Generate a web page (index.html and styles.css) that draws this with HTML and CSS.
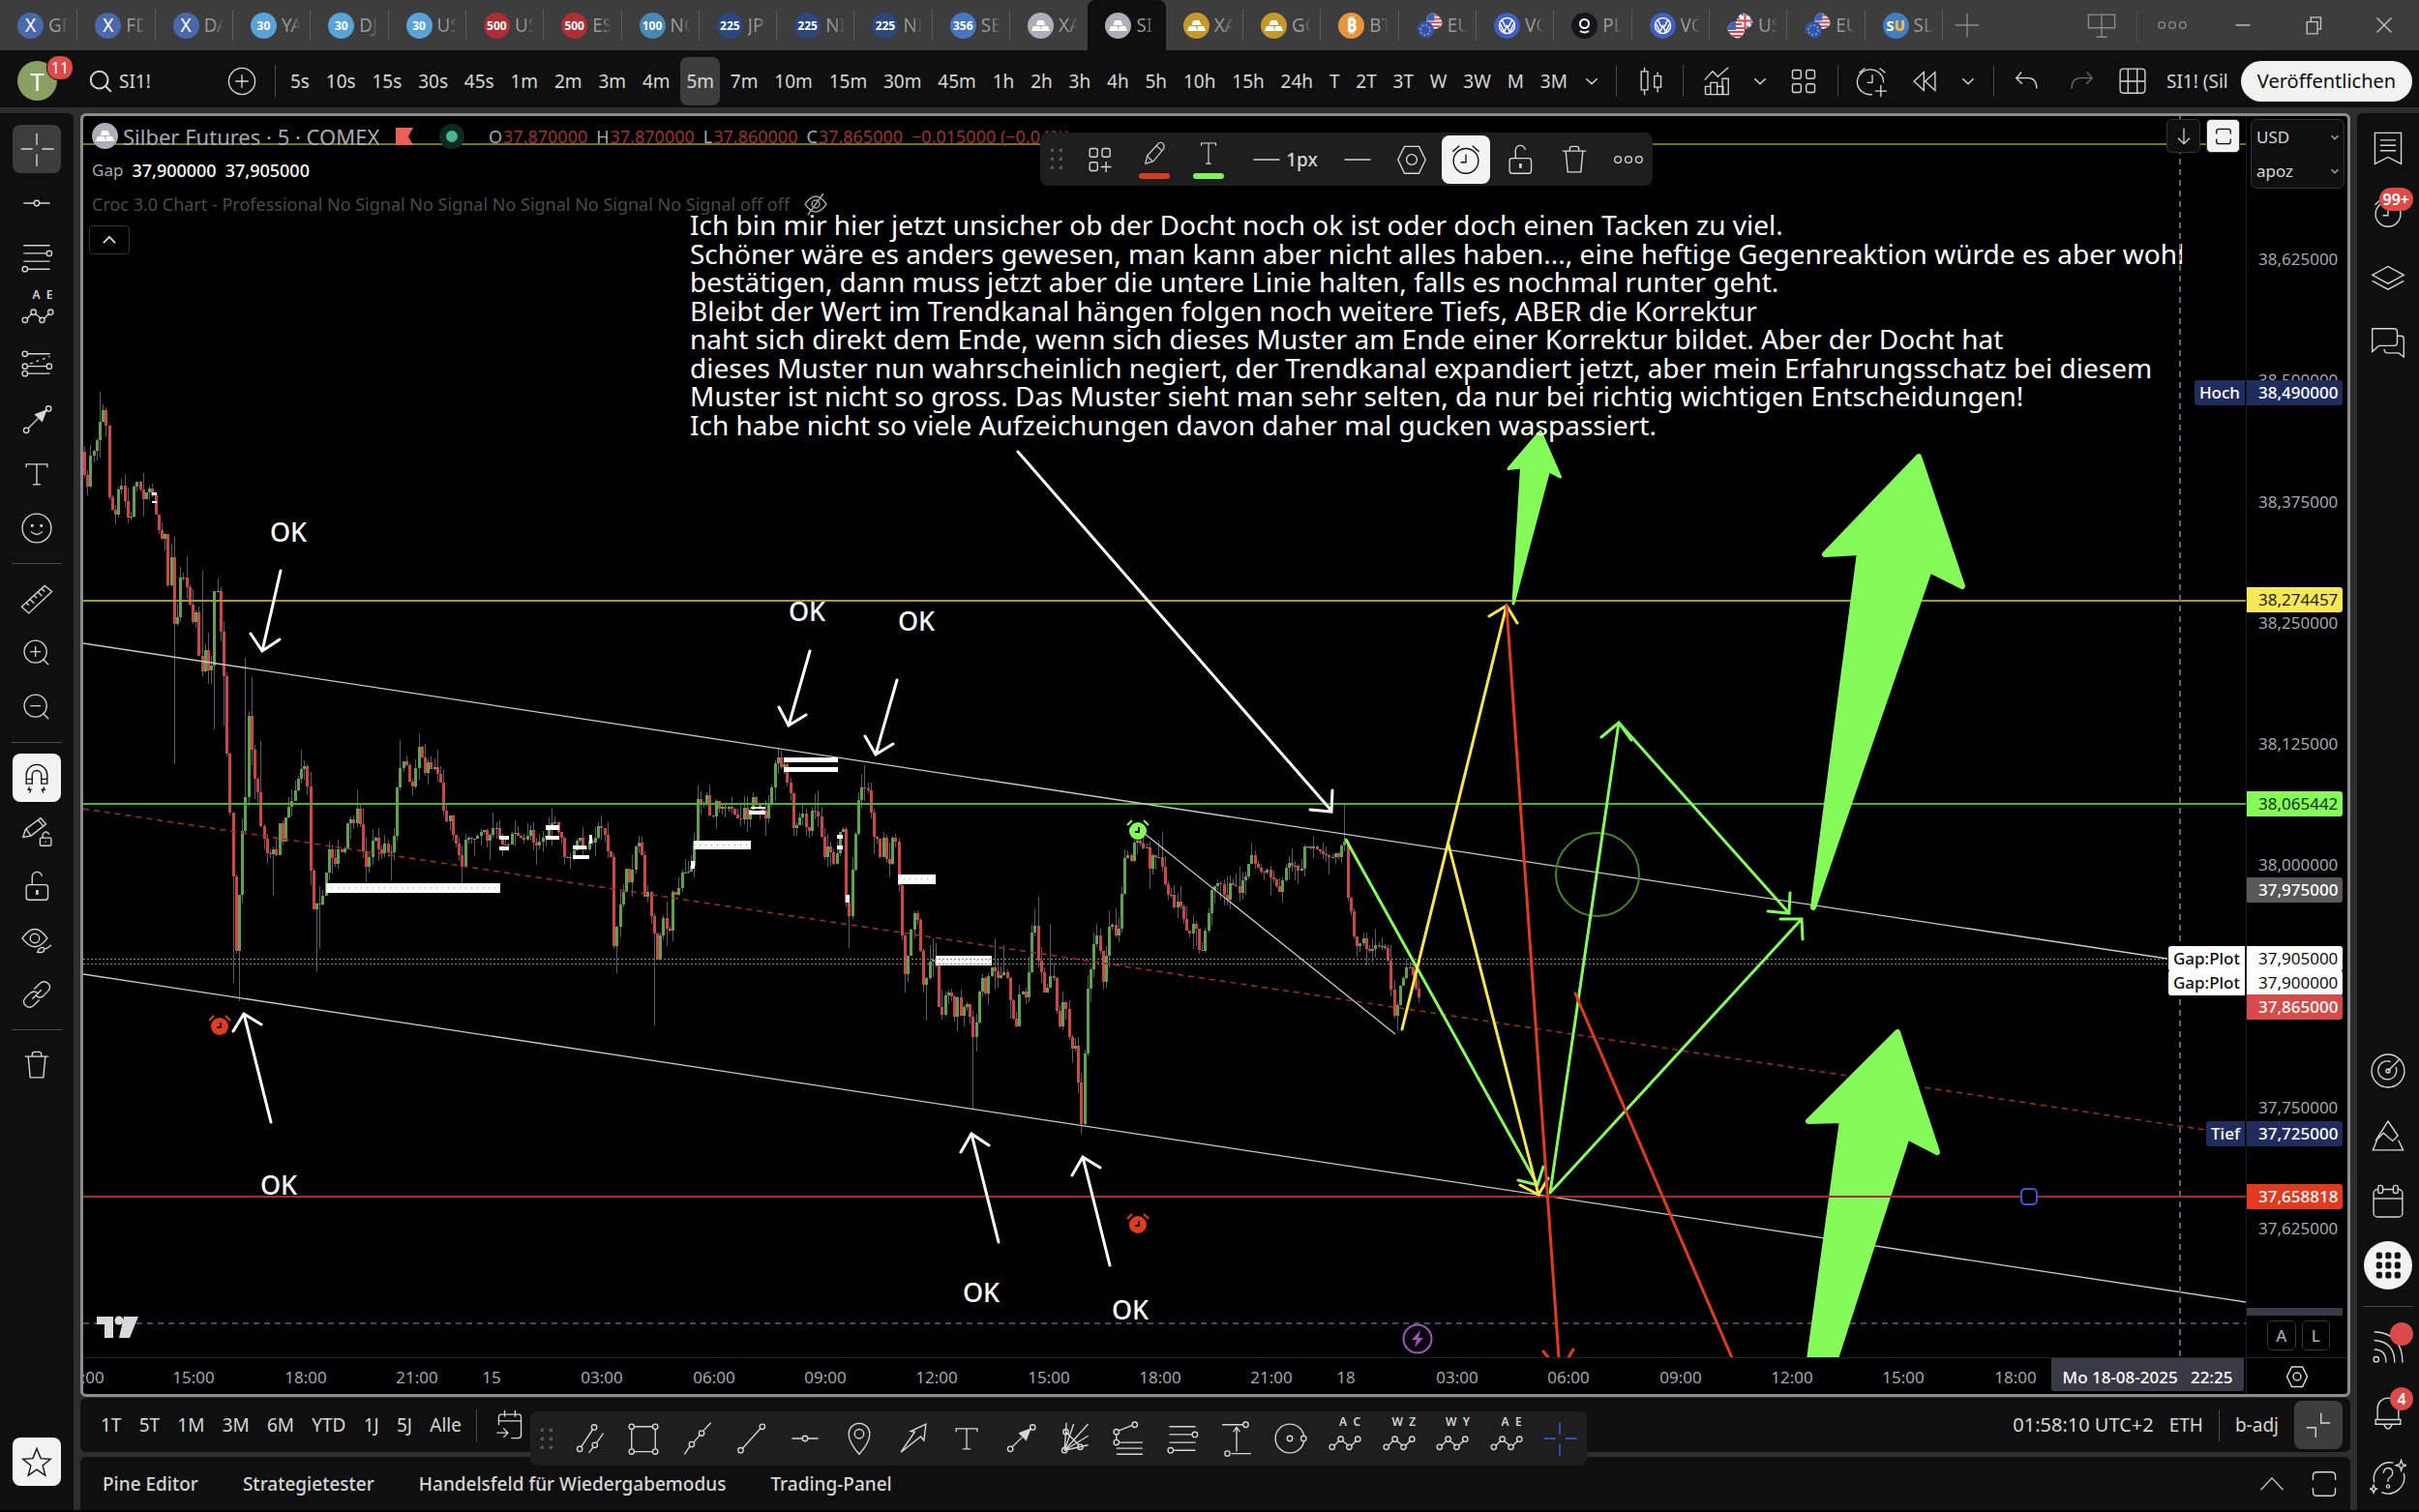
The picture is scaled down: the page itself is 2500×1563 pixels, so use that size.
FILE: index.html
```html
<!DOCTYPE html>
<html lang="de">
<head>
<meta charset="utf-8">
<title>SI1! – Silber Futures</title>
<link rel="stylesheet" href="styles.css">
</head>
<body>
<svg class="sprite" aria-hidden="true">
  <symbol id="bars" viewBox="0 0 27 27"><path fill="#fff" stroke="none" d="M10.500 8h6l2 5h-10zM6 14h6.500l2 5H4zM14.500 14H21l2 5h-8.500z"/></symbol>
  <symbol id="us" viewBox="0 0 18 18"><circle cx="9" cy="9" r="9" fill="#eee" stroke="none"/><path stroke="#d8424a" stroke-width="2" d="M9 3h6M9 7h9M1 11h16M3 15h12"/><path fill="#3b63b8" stroke="none" d="M9 0v9H0a9 9 0 0 1 9-9z"/></symbol>
  <symbol id="eu" viewBox="0 0 18 18"><circle cx="9" cy="9" r="9" fill="#2f55b8" stroke="none"/><circle cx="9" cy="9" r="5" stroke="#d9c04a" stroke-width="1.500" stroke-dasharray="1.500 2.400"/></symbol>
  <symbol id="gb" viewBox="0 0 18 18"><circle cx="9" cy="9" r="9" fill="#2f4fa0" stroke="none"/><path stroke="#eee" stroke-width="4" d="M9 0v18M0 9h18M3 3l12 12M15 3L3 15"/><path stroke="#d8424a" stroke-width="2" d="M9 0v18M0 9h18"/></symbol>
  <symbol id="vw" viewBox="0 0 27 27"><circle cx="13.500" cy="13.500" r="13.500" fill="#3f5fc4" stroke="none"/><g stroke="#fff" stroke-width="1.500"><circle cx="13.500" cy="13.500" r="8"/><path d="M8.500 8l3 6h4l3-6M6.500 11.500l4 8.500 3-6 3 6 4-8.500"/></g></symbol>
  <symbol id="plus" viewBox="0 0 28 28"><path d="M14 5v18M5 14h18"/></symbol>
  <symbol id="monitor" viewBox="0 0 28 28"><path d="M4 6h20v10H4zM14 6v17M10 23h8"/></symbol>
  <symbol id="more" viewBox="0 0 28 28"><circle cx="6" cy="14" r="2.500"/><circle cx="14" cy="14" r="2.500"/><circle cx="22" cy="14" r="2.500"/></symbol>
  <symbol id="min" viewBox="0 0 28 28"><path d="M8.500 14h11"/></symbol>
  <symbol id="restore" viewBox="0 0 28 28"><path d="M9 11.500h8v9H9zM12 11V8h7.500v9H17"/></symbol>
  <symbol id="close" viewBox="0 0 28 28"><path d="M8.500 8.500l11 11M19.500 8.500l-11 11"/></symbol>
  <symbol id="search" viewBox="0 0 28 28"><circle cx="13" cy="13" r="6.500"/><path d="M17.500 17.500l4.500 4.500"/></symbol>
  <symbol id="pluscircle" viewBox="0 0 28 28"><circle cx="14" cy="14" r="10"/><path d="M14 9v10M9 14h10"/></symbol>
  <symbol id="down" viewBox="0 0 28 28"><path d="M6 10l8 8 8-8"/></symbol>
  <symbol id="up" viewBox="0 0 28 28"><path d="M5.500 18.500L14 9.500l8.500 9"/></symbol>
  <symbol id="candles" viewBox="0 0 28 28"><path d="M7.500 6.500h5v14h-5zM10 3.500v3M10 20.500v4M17.500 10h5v8.500h-5zM20 7v3M20 18.500v4"/></symbol>
  <symbol id="indicators" viewBox="0 0 28 28"><path d="M5.500 24v-6h4v6M9.500 24v-9h5v9M14.500 24v-6H19v6M18.500 24V12H23v12zM5.500 24h17M5 13l6-6.500 4 4L23 3.500"/></symbol>
  <symbol id="grid4" viewBox="0 0 28 28"><rect x="5.500" y="5.500" width="6.500" height="6.500" rx="1.500"/><rect x="16" y="5.500" width="6.500" height="6.500" rx="1.500"/><rect x="5.500" y="16" width="6.500" height="6.500" rx="1.500"/><rect x="16" y="16" width="6.500" height="6.500" rx="1.500"/></symbol>
  <symbol id="template" viewBox="0 0 28 28"><rect x="6" y="5.500" width="6" height="6.500" rx="1.500"/><rect x="15.500" y="5.500" width="6" height="6.500" rx="1.500"/><rect x="6" y="16" width="6" height="6.500" rx="1.500"/><path d="M18.500 15.500v8M14.500 19.500h8"/></symbol>
  <symbol id="alertadd" viewBox="0 0 28 28"><path d="M14 24a10 9.500 0 1 1 8.500-9M14 9v6h-4M4 7.500L8.500 4M24 7.500L19.500 4M20.500 17v9M16 21.500h9"/></symbol>
  <symbol id="alarm" viewBox="0 0 28 28"><circle cx="14" cy="15" r="9.500"/><path d="M14 10v6h-4M4 8l5-4.500M24 8l-5-4.500"/></symbol>
  <symbol id="rewind" viewBox="0 0 28 28"><path d="M13.500 7v14L6 14zM22 7v14l-7.500-7z"/></symbol>
  <symbol id="undo" viewBox="0 0 28 28"><path d="M9 7l-4 4.500L9.500 16M5.500 11.500H14q6.500 0 6.500 8"/></symbol>
  <symbol id="redo" viewBox="0 0 28 28"><path d="M19 7l4 4.500-4.500 4.500M22.500 11.500H14q-6.500 0-6.500 8"/></symbol>
  <symbol id="layout" viewBox="0 0 28 28"><rect x="4.500" y="4.500" width="19" height="18.500" rx="2.500"/><path d="M10.500 4.500V23M17.500 4.500V23M4.500 14h19"/></symbol>
  <symbol id="cross" viewBox="0 0 28 28"><path d="M14 2v9M14 18v9M2 14h9M18 14h9"/></symbol>
  <symbol id="hline" viewBox="0 0 28 28"><circle cx="14" cy="14" r="2"/><path d="M4 14h8M16 14h8"/></symbol>
  <symbol id="fib" viewBox="0 0 28 28"><path d="M4 5h20M4 11h18M4 17h20M7 23h17"/><circle cx="23.500" cy="11" r="2" class="dot"/><circle cx="5" cy="23" r="2" class="dot"/></symbol>
  <symbol id="pattern" viewBox="0 0 28 28"><path d="M6.500 19.500l4-4M12.500 15.500l5 4M19.500 19.500l4-4"/><circle cx="5" cy="20.500" r="2"/><circle cx="11.500" cy="14.500" r="2"/><circle cx="18" cy="20.500" r="2"/><circle cx="24.500" cy="14.500" r="2"/></symbol>
  <symbol id="forecast" viewBox="0 0 28 28"><path d="M6.500 5H24M6.500 14.500h15M6.500 20H24"/><path stroke-dasharray="2 3" d="M9 12.500L24 7"/><circle cx="5" cy="5" r="2"/><circle cx="5" cy="14.500" r="2"/><circle cx="23.500" cy="14.500" r="2"/><circle cx="5" cy="20" r="2"/></symbol>
  <symbol id="marker" viewBox="0 0 28 28"><path d="M7.500 20.500L15 13M20 8l2-2"/><path fill="currentColor" d="M21 7l-3 8-5-5z"/><circle cx="6" cy="22" r="2"/><circle cx="23" cy="5.500" r="2"/></symbol>
  <symbol id="text" viewBox="0 0 28 28"><path d="M6 9V6.500h16V9M14 6.500V22M11 22h6"/></symbol>
  <symbol id="smile" viewBox="0 0 28 28"><circle cx="14" cy="14" r="11"/><path d="M9.500 16.500q4.500 4.500 9 0"/><path stroke-width="2" d="M10.500 11v2M17.500 11v2"/></symbol>
  <symbol id="ruler" viewBox="0 0 28 28"><path d="M2.500 20L20 4l5.500 4.500L8 25zM6 17l2 2M9 14.500l3 3M12 11.500l2 2M15 9l3 3M18 6.500l2 2"/></symbol>
  <symbol id="zoomin" viewBox="0 0 28 28"><circle cx="13" cy="13" r="8.500"/><path d="M19 19l4 4M9 13h8M13 9v8"/></symbol>
  <symbol id="zoomout" viewBox="0 0 28 28"><circle cx="13" cy="13" r="8.500"/><path d="M19 19l4 4M9 13h8"/></symbol>
  <symbol id="magnet" viewBox="0 0 28 28"><path d="M6 18.500V12a8 8 0 0 1 16 0v6.500h-4.500V12a3.500 3.500 0 0 0-7 0v6.500zM6 15h4.500M17.500 15H22M8.500 21L7.500 23H9.500L8.500 25.500M19 21l1 2h-2l1 2.500"/></symbol>
  <symbol id="pencillock" viewBox="0 0 28 28"><path d="M3.500 18l2-6L17 3.500 21 8 9.500 17zM6 12l3.500 5M15 5l4 4.500"/><rect x="16.500" y="18.500" width="8.500" height="6" rx="1"/><path d="M18.500 18.500V16q2.500-4 5 0M20.800 21v1"/></symbol>
  <symbol id="lock" viewBox="0 0 28 28"><rect x="6" y="13" width="16.500" height="11.500" rx="2"/><path d="M10.500 13V7.500a3.700 3.700 0 0 1 7.500-1"/><path stroke-width="2" d="M14.300 17v3.500"/></symbol>
  <symbol id="eye" viewBox="0 0 28 28"><path d="M3 12.500q9.500-14 19 0-9.500 13-19 0z"/><circle cx="12.500" cy="12.500" r="3.500"/><path d="M14.500 23q2-5 5-3 1 4-5 3zM20 20.500q2 0 5-3"/></symbol>
  <symbol id="link" viewBox="0 0 28 28"><path d="M12 10l4.500-4.500q3-2.500 6 0t0 6L19 15q-3 2.500-5.500 0M16 18l-4.500 4.500q-3 2.500-6 0t0-6L9 13q3-2.500 5.500 0M10.500 17.500l7-7"/></symbol>
  <symbol id="trash" viewBox="0 0 28 28"><path d="M5 7.500h18M7.500 7.500L9 23.500h10l1.500-16M10.500 7.500V6q0-2 2-2h3q2 0 2 2v1.500"/></symbol>
  <symbol id="star" viewBox="0 0 28 28"><path d="M14 4l3 7.500 7.500.5-6 5 2 7.500-6.500-4.500-6.500 4.500 2-7.500-6-5 7.500-.5z"/></symbol>
  <symbol id="bookmark" viewBox="0 0 28 28"><path d="M4 2.500h20V26l-10-5-10 5zM8 8h12M8 12h12M8 16h12"/></symbol>
  <symbol id="layers" viewBox="0 0 28 28"><path d="M2 12l12-6.500L26 12l-12 6.500zM2 16.500L14 23l12-6.500"/></symbol>
  <symbol id="chat" viewBox="0 0 28 28"><path d="M2 3.500h16.500q2.500 0 2.500 2.500v8q0 2.500-2.500 2.500H7L2 21zM21 9h2.500q2.500 0 2.500 2.500V25l-4-3h-8.500q-2 0-2.500-3"/></symbol>
  <symbol id="radar" viewBox="0 0 28 28"><circle cx="14" cy="14" r="12.500"/><path d="M20 11a7 7 0 1 1-4-4M14 14l9-9"/><circle cx="14" cy="14" r="1.500"/></symbol>
  <symbol id="pyramid" viewBox="0 0 28 28"><path d="M4.500 18L14 3l7.500 11-4 4-7-6zM5.500 17.500L2.500 25h23L22 17.500"/></symbol>
  <symbol id="calendar" viewBox="0 0 28 28"><rect x="3" y="5.500" width="22" height="21" rx="3"/><path d="M3 12.500h22"/><rect x="6.500" y="2.500" width="3.500" height="6" rx="1.500" class="dot"/><rect x="18" y="2.500" width="3.500" height="6" rx="1.500" class="dot"/></symbol>
  <symbol id="apps" viewBox="0 0 28 28"><g fill="#0f0f0f" stroke="none"><rect x="5" y="4" width="4.500" height="5" rx="1.500"/><rect x="12" y="4" width="4.500" height="5" rx="1.500"/><rect x="19" y="4" width="4.500" height="5" rx="1.500"/><rect x="5" y="11.500" width="4.500" height="5" rx="1.500"/><rect x="12" y="11.500" width="4.500" height="5" rx="1.500"/><rect x="19" y="11.500" width="4.500" height="5" rx="1.500"/><rect x="5" y="19" width="4.500" height="5" rx="1.500"/><rect x="12" y="19" width="4.500" height="5" rx="1.500"/><rect x="19" y="19" width="4.500" height="5" rx="1.500"/></g></symbol>
  <symbol id="feed" viewBox="0 0 28 28"><circle cx="5" cy="23" r="2"/><path d="M3.500 15.500q9 0 9 10M3.500 8.500q15.500 1 15.500 17M3.500 2Q25 3 25 25.500"/></symbol>
  <symbol id="bell" viewBox="0 0 28 28"><path d="M6 19.500V11a8 8 0 0 1 16 0v8.500M4.500 19.500h19v3.500h-19zM11 23.500q3 6 6 0"/></symbol>
  <symbol id="help" viewBox="0 0 28 28"><path d="M18 3A12.500 12.500 0 0 0 3.500 18M9 25.500A12.500 12.500 0 0 0 26 11M10.500 11q.5-4 3.500-4t3.500 3.500q0 2.500-2 3.500T14 17.500"/><circle cx="14" cy="21" r="1.200"/><path d="M24 1l1 3 3 1-3 1-1 3-1-3-3-1 3-1zM3 20l1 2.500 2 .5-2 .5-1 2.500-1-2.500-2-.5 2-.5z"/></symbol>
  <symbol id="pencil" viewBox="0 0 28 28"><path d="M6 22l1.500-7L18 3.500q2.500-1.500 4 .5t.5 4.500L13 20zM16 6l4.500 4M7.500 15l5 5"/></symbol>
  <symbol id="textline" viewBox="0 0 28 28"><path d="M7.500 6V3.500h13V6M14 3.500V22M11.500 22h5"/></symbol>
  <symbol id="line" viewBox="0 0 28 28"><path d="M4 14h20"/></symbol>
  <symbol id="hex" viewBox="0 0 28 28"><path d="M8.500 4h11l5 10-5 10.500h-11L3.500 14z"/><circle cx="14" cy="14" r="4"/></symbol>
  <symbol id="arrowdown" viewBox="0 0 28 28"><path d="M14 4v19M7 16l7 7 7-7"/></symbol>
  <symbol id="frame" viewBox="0 0 28 28"><path d="M5.500 11V8q0-3 3-3h11q3 0 3 3v3M5.500 17v3q0 3 3 3h11q3 0 3-3v-3"/></symbol>
  <symbol id="eyeoff" viewBox="0 0 28 28"><path d="M3 14q11-16 22 0-11 16-22 0zM22 3L6 25"/><circle cx="14" cy="14" r="4"/></symbol>
  <symbol id="goto" viewBox="0 0 28 28"><path d="M5.500 14V8q0-2 2-2h13q2 0 2 2v14q0 2-2 2H15M5.500 11h17M10 3v5M18 3v5M4 20h8M9 16.500l3.500 3.500L9 23.500"/></symbol>
  <symbol id="collapse" viewBox="0 0 28 28"><path d="M16 5v7.500h7M12 23.500V16H5"/></symbol>
  <symbol id="parallel" viewBox="0 0 28 28"><path d="M7 20.500L16 7M13 25l3-4M19 17l5-7"/><circle cx="6" cy="22" r="2"/><circle cx="17" cy="5.500" r="2"/><circle cx="17.500" cy="19" r="2"/></symbol>
  <symbol id="rect" viewBox="0 0 28 28"><path d="M7 5h14M7 24h14M5 7v15M23 7v15"/><circle cx="5" cy="5" r="2"/><circle cx="23" cy="5" r="2"/><circle cx="5" cy="24" r="2"/><circle cx="23" cy="24" r="2"/></symbol>
  <symbol id="extended" viewBox="0 0 28 28"><path d="M4 26l4-6M11 17l5-6M18.500 8L24 2"/><circle cx="9.500" cy="18.500" r="2"/><circle cx="17" cy="10" r="2"/></symbol>
  <symbol id="trend" viewBox="0 0 28 28"><path d="M7 21.500L20.500 6.500"/><circle cx="5.500" cy="23" r="2"/><circle cx="22" cy="5" r="2"/></symbol>
  <symbol id="pin" viewBox="0 0 28 28"><path d="M14 26Q6 17 6 10.500a8 8 0 0 1 16 0Q22 17 14 26z"/><circle cx="14" cy="10.500" r="3.500"/></symbol>
  <symbol id="arrow" viewBox="0 0 28 28"><path d="M4.500 24.500L15 9l-3-.5L23.500 3 22 15.500l-2.500-3z"/></symbol>
  <symbol id="gann" viewBox="0 0 28 28"><path d="M6 23L7.500 2M6 23l7-20M6 23L24 3M6 23l18-11M6 23l18-4M7 9l10 10"/><circle cx="6" cy="23" r="2"/><circle cx="7" cy="9" r="2"/><circle cx="18" cy="20.500" r="2"/></symbol>
  <symbol id="fibext" viewBox="0 0 28 28"><path d="M7 8l10-4M5 11v4M7 17h18M5 21.500h20M5 26h20"/><circle cx="19" cy="3.500" r="2"/><circle cx="5" cy="9" r="2"/><circle cx="5" cy="17" r="2"/></symbol>
  <symbol id="measure" viewBox="0 0 28 28"><path d="M3 3.500h16M10 25.500h15M14 6v18M11.500 9L14 5.500 16.500 9"/><circle cx="21" cy="3.500" r="2"/><circle cx="7" cy="25.500" r="2"/></symbol>
  <symbol id="circle" viewBox="0 0 28 28"><circle cx="14" cy="14" r="11"/><circle cx="14" cy="14" r="2"/><circle cx="24.500" cy="14" r="2" class="dot"/></symbol>
</svg>

<div class="app">
  <nav class="tabbar" aria-label="Tabs">
    <div class="tabs">
      <button class="tab"><i class="coin blue x">X</i><span>GE</span></button>
      <button class="tab"><i class="coin blue x">X</i><span>FD</span></button>
      <button class="tab"><i class="coin blue x">X</i><span>DA</span></button>
      <button class="tab"><i class="coin sky">30</i><span>YA</span></button>
      <button class="tab"><i class="coin sky">30</i><span>DJ</span></button>
      <button class="tab"><i class="coin sky">30</i><span>US</span></button>
      <button class="tab"><i class="coin crimson">500</i><span>US</span></button>
      <button class="tab"><i class="coin crimson">500</i><span>ES</span></button>
      <button class="tab"><i class="coin teal">100</i><span>NQ</span></button>
      <button class="tab"><i class="coin navy">225</i><span>JP</span></button>
      <button class="tab"><i class="coin navy">225</i><span>NI</span></button>
      <button class="tab"><i class="coin navy">225</i><span>NI</span></button>
      <button class="tab"><i class="coin steel">356</i><span>SE</span></button>
      <button class="tab last"><svg class="coin silver"><use href="#bars"/></svg><span>XA</span></button>
      <button class="tab active"><svg class="coin silver"><use href="#bars"/></svg><span>SI</span></button>
      <button class="tab"><svg class="coin gold"><use href="#bars"/></svg><span>XA</span></button>
      <button class="tab"><svg class="coin gold"><use href="#bars"/></svg><span>GC</span></button>
      <button class="tab"><i class="coin orange">₿</i><span>BT</span></button>
      <button class="tab"><svg class="coin"><use href="#us" x="10" y="0" width="17" height="17"/><use href="#eu" x="0" y="9" width="18" height="18"/></svg><span>EU</span></button>
      <button class="tab"><svg class="coin"><use href="#vw"/></svg><span>VO</span></button>
      <button class="tab"><svg class="coin black" viewBox="0 0 27 27"><g stroke="#fff" stroke-width="2"><circle cx="13.500" cy="11.500" r="4.500"/><path d="M9 19q4.500 3 9 0"/></g></svg><span>PL</span></button>
      <button class="tab"><svg class="coin"><use href="#vw"/></svg><span>VO</span></button>
      <button class="tab"><svg class="coin"><use href="#gb" x="10" y="0" width="17" height="17"/><use href="#us" x="0" y="9" width="18" height="18"/></svg><span>US</span></button>
      <button class="tab"><svg class="coin"><use href="#us" x="10" y="0" width="17" height="17"/><use href="#eu" x="0" y="9" width="18" height="18"/></svg><span>EU</span></button>
      <button class="tab"><i class="coin slblue">S<b>U</b></i><span>SL</span></button>
    </div>
    <button class="ic dim newtab" aria-label="Neuer Tab"><svg><use href="#plus"/></svg></button>
    <div class="window">
      <button class="ic dim" aria-label="Layouts"><svg><use href="#monitor"/></svg></button>
      <i class="sep"></i>
      <button class="ic dim" aria-label="Mehr"><svg><use href="#more"/></svg></button>
      <div class="winbtns">
        <button aria-label="Minimieren"><svg><use href="#min"/></svg></button>
        <button aria-label="Wiederherstellen"><svg><use href="#restore"/></svg></button>
        <button aria-label="Schließen"><svg><use href="#close"/></svg></button>
      </div>
    </div>
  </nav>

  <header class="toolbar">
    <button class="avatar">T<b class="badge">11</b></button>
    <button class="symbol"><svg class="bold"><use href="#search"/></svg>SI1!</button>
    <button class="ic" aria-label="Vergleichen"><svg><use href="#pluscircle"/></svg></button>
    <i class="sep"></i>
    <div class="intervals">
      <button>5s</button><button>10s</button><button>15s</button><button>30s</button><button>45s</button><button>1m</button><button>2m</button><button>3m</button><button>4m</button><button class="on">5m</button><button>7m</button><button>10m</button><button>15m</button><button>30m</button><button>45m</button><button>1h</button><button>2h</button><button>3h</button><button>4h</button><button>5h</button><button>10h</button><button>15h</button><button>24h</button><button>T</button><button>2T</button><button>3T</button><button>W</button><button>3W</button><button>M</button><button>3M</button>
    </div>
    <button class="chev" aria-label="Intervalle"><svg><use href="#down"/></svg></button>
    <i class="sep"></i>
    <button class="ic" aria-label="Kerzen"><svg><use href="#candles"/></svg></button>
    <i class="sep"></i>
    <div class="tools">
      <button class="ic" aria-label="Indikatoren"><svg><use href="#indicators"/></svg></button>
      <button class="chev" aria-label="Favoriten"><svg><use href="#down"/></svg></button>
      <button class="ic" aria-label="Vorlagen"><svg><use href="#grid4"/></svg></button>
      <i class="sep"></i>
      <button class="ic" aria-label="Alarm"><svg><use href="#alertadd"/></svg></button>
      <button class="ic" aria-label="Wiedergabe"><svg><use href="#rewind"/></svg></button>
      <button class="chev" aria-label="Wiedergabe wählen"><svg><use href="#down"/></svg></button>
      <i class="sep"></i>
      <button class="ic" aria-label="Rückgängig"><svg><use href="#undo"/></svg></button>
      <button class="ic faint" aria-label="Wiederholen"><svg><use href="#redo"/></svg></button>
      <button class="ic" aria-label="Layout"><svg><use href="#layout"/></svg></button>
    </div>
    <div class="share">
      <button class="layoutname">SI1! (Sil</button>
      <button class="publish">Veröffentlichen</button>
    </div>
  </header>

  <main class="main">
    <aside class="left">
      <button class="sq soft" aria-label="Fadenkreuz"><svg><use href="#cross"/></svg></button>
      <button class="sq" aria-label="Linien"><svg><use href="#hline"/></svg></button>
      <button class="sq" aria-label="Fibonacci"><svg><use href="#fib"/></svg></button>
      <button class="sq lettered" aria-label="Muster"><small>A&nbsp; E</small><svg><use href="#pattern"/></svg></button>
      <button class="sq" aria-label="Prognose"><svg><use href="#forecast"/></svg></button>
      <button class="sq" aria-label="Pfeil"><svg><use href="#marker"/></svg></button>
      <button class="sq" aria-label="Text"><svg><use href="#text"/></svg></button>
      <button class="sq" aria-label="Symbole"><svg><use href="#smile"/></svg></button>
      <hr>
      <button class="sq" aria-label="Messen"><svg><use href="#ruler"/></svg></button>
      <button class="sq" aria-label="Vergrößern"><svg><use href="#zoomin"/></svg></button>
      <button class="sq" aria-label="Verkleinern"><svg><use href="#zoomout"/></svg></button>
      <hr>
      <button class="sq light" aria-label="Magnet"><svg><use href="#magnet"/></svg></button>
      <button class="sq" aria-label="Zeichenmodus"><svg><use href="#pencillock"/></svg></button>
      <button class="sq" aria-label="Sperren"><svg><use href="#lock"/></svg></button>
      <button class="sq" aria-label="Ausblenden"><svg><use href="#eye"/></svg></button>
      <button class="sq" aria-label="Verknüpfen"><svg><use href="#link"/></svg></button>
      <hr>
      <button class="sq" aria-label="Löschen"><svg><use href="#trash"/></svg></button>
      <button class="sq light bottom" aria-label="Favoriten"><svg><use href="#star"/></svg></button>
    </aside>

    <section class="center">
      <div class="chart">
        <div class="plot">
          <svg class="draw" viewBox="86 120 2235 1283" preserveAspectRatio="none">
            <path stroke="#7b701b" stroke-width="2" d="M86 149h2235"/>
            <path stroke="#454a57" stroke-width="2" stroke-dasharray="6 5" d="M86 1368h2235"/>
            <g id="candlestick">
              <path id="wicks" stroke="#5b5b66"/>
              <path id="ups" fill="#5fa24c"/>
              <path id="downs" fill="#cf4446"/>
            </g>
            <path fill="#fff" d="M337 913h180v10H337zM516 864h10v4h-10zM516 875h10v4h-10zM564 853h14v5h-14zM564 864h14v4h-14zM592 874h14v4h-14zM592 884h17v4h-17zM609 863h3v9h-3zM717 869h59v9h-59zM774 838h17v4h-17zM776 834h15v2h-15zM714 890h4v8h-4zM810 783h56v5h-56zM810 793h56v5h-56zM865 863h6v4h-6zM865 874h6v4h-6zM874 925h4v8h-4zM928 904h39v10h-39zM967 988h58v10h-58zM157 509h5v3h-5zM157 518h5v2h-5z"/>
            <path stroke="#888" stroke-dasharray="1 5" d="M337 918h180M717 873.500h59M928 909h39M967 993h58"/>
            <path stroke="#8a8a8a" stroke-dasharray="2 2" d="M86 991.500h2154M86 996.500h2154"/>
            <path stroke="#a8982f" stroke-width="2" d="M86 621h2235"/>
            <path stroke="#55ad38" stroke-width="2" d="M86 831h2235"/>
            <path stroke="#c9c9c9" stroke-width="1.300" d="M86 665L2240 991M86 1007L2321 1346M1172 853L1442 1069"/>
            <path stroke="#a62c1b" stroke-width="1.500" stroke-dasharray="6 5" d="M86 836L2279 1168"/>
            <g fill="#84fb58" stroke="#84fb58" stroke-width="6" stroke-linejoin="round">
              <path stroke-width="3" d="M1592 446L1559 484.500 1572.500 483 1564 624 1600.500 487 1612.500 493z"/>
              <path d="M1983 472L1886 573 1922 571 1874 938 1994 589 2028 606z"/>
              <path d="M1961 1067L1869 1159 1904 1158 1868 1420 1892 1420 1971 1175 2002 1191z"/>
            </g>
            <path stroke="#a62c1b" stroke-width="2" d="M86 1237h2235"/>
            <circle cx="1651" cy="904" r="43" stroke="#3f8a26" stroke-width="2"/>
            <g stroke-width="3" stroke-linecap="round">
              <path stroke="#fff" d="M290 590L271 673M259 655l12 18 18-12M837 673l-22 77M805 731l10 19 18-11M927 703l-22 77M894 761l11 19 18-11M280 1160L252 1048M241 1066l11-18 18 11M1032 1284L1004 1172M993 1191l11-19 18 12M1147 1308L1119 1196M1108 1215l11-19 18 11M1052 467L1376 838M1354 837l22 2 1-22"/>
              <path stroke="#84fb58" d="M1391 868L1589 1225M1569 1220l20 5 6-19M1602 1233L1673 747M1655 762l18-15 13 18M1673 747L1849 944M1827 942l22 2 1-21M1602 1233L1862 950M1840 950h22l1 21"/>
              <path stroke="#f9e64f" d="M1449 1064L1557 626M1539 637l18-11 11 18M1497 873L1590 1235M1571 1225l19 10 10-17"/>
              <path stroke="#e23a1e" d="M1557 626L1612 1418M1595 1397l17 21 14-23M1628 1027L1797 1420"/>
            </g>
            <g fill="#e23a1e"><circle cx="227" cy="1061" r="9"/><circle cx="1176" cy="1266" r="9"/></g>
            <circle cx="1176" cy="859" r="9" fill="#84fb58"/>
            <path stroke="#e23a1e" stroke-width="2" d="M216 1055l5-5M238 1055l-5-5M1165 1260l5-5M1187 1260l-5-5"/>
            <path stroke="#84fb58" stroke-width="2" d="M1165 853l5-5M1187 853l-5-5"/>
            <path stroke="#111" stroke-width="2" d="M228 1057v5h-4M1177 1262v5h-4M1177 855v5h-4"/>
            <rect x="2089" y="1229" width="16" height="16" rx="4" fill="#000" stroke="#4453cf" stroke-width="2"/>
            <g fill="#d9d9d9"><path d="M100 1361h17v22h-9v-14h-8zM128 1361h15l-9 22h-11z"/><circle cx="123" cy="1365" r="4.500"/></g>
            <circle cx="1465" cy="1384" r="14.500" fill="#0c0710" stroke="#9a56b4" stroke-width="2"/>
            <path fill="#9a56b4" d="M1468 1375l-9 10h5l-2 8 9-10h-5z"/>
          </svg>

          <div class="note pin" style="--x:713;--y:218">
            <span>Ich bin mir hier jetzt unsicher ob der Docht noch ok ist oder doch einen Tacken zu viel.</span>
            <span>Schöner wäre es anders gewesen, man kann aber nicht alles haben..., eine heftige Gegenreaktion würde es aber wohl</span>
            <span>bestätigen, dann muss jetzt aber die untere Linie halten, falls es nochmal runter geht.</span>
            <span>Bleibt der Wert im Trendkanal hängen folgen noch weitere Tiefs, ABER die Korrektur</span>
            <span>naht sich direkt dem Ende, wenn sich dieses Muster am Ende einer Korrektur bildet. Aber der Docht hat</span>
            <span>dieses Muster nun wahrscheinlich negiert, der Trendkanal expandiert jetzt, aber mein Erfahrungsschatz bei diesem</span>
            <span>Muster ist nicht so gross. Das Muster sieht man sehr selten, da nur bei richtig wichtigen Entscheidungen!</span>
            <span>Ich habe nicht so viele Aufzeichungen davon daher mal gucken waspassiert.</span>
          </div>
          <span class="ok pin" style="--x:298;--y:550">OK</span>
          <span class="ok pin" style="--x:834;--y:632">OK</span>
          <span class="ok pin" style="--x:947;--y:642">OK</span>
          <span class="ok pin" style="--x:288;--y:1225">OK</span>
          <span class="ok pin" style="--x:1014;--y:1336">OK</span>
          <span class="ok pin" style="--x:1168;--y:1354">OK</span>

          <svg class="draw" viewBox="86 120 2235 1283" preserveAspectRatio="none"><path stroke="#5b6573" stroke-width="2" stroke-dasharray="6 5" d="M2253 120v1283"/></svg>

          <div class="legend">
            <div class="row title"><svg class="coin silver"><use href="#bars"/></svg><span class="name">Silber Futures · 5 · COMEX</span>
              <svg class="flag" viewBox="0 0 18 18"><path fill="#ea5f57" d="M0 0h18l-5 9 5 9H0z"/></svg><i class="live"></i>
              <dl class="ohlc"><div><dt>O</dt><dd>37,870000</dd></div><div><dt>H</dt><dd>37,870000</dd></div><div><dt>L</dt><dd>37,860000</dd></div><div><dt>C</dt><dd>37,865000</dd></div><div><dd>−0,015000 (−0,04%)</dd></div></dl>
            </div>
            <div class="row gap">Gap <b>37,900000</b><b>37,905000</b></div>
            <div class="row croc">Croc 3.0 Chart - Professional No Signal No Signal No Signal No Signal No Signal off off<svg><use href="#eyeoff"/></svg></div>
            <button class="fold" aria-label="Legende einklappen"><svg><use href="#up"/></svg></button>
          </div>

          <div class="float props pin" style="--x:1075;--y:137">
            <i class="grip"></i>
            <button class="sq" aria-label="Vorlage"><svg><use href="#template"/></svg></button>
            <button class="sq swatch red" aria-label="Linienfarbe"><svg><use href="#pencil"/></svg></button>
            <button class="sq swatch green" aria-label="Textfarbe"><svg><use href="#textline"/></svg></button>
            <button class="sq width"><svg><use href="#line"/></svg>1px</button>
            <button class="sq" aria-label="Linienart"><svg><use href="#line"/></svg></button>
            <button class="sq" aria-label="Einstellungen"><svg><use href="#hex"/></svg></button>
            <button class="sq light" aria-label="Alarm"><svg><use href="#alarm"/></svg></button>
            <button class="sq" aria-label="Sperren"><svg><use href="#lock"/></svg></button>
            <button class="sq" aria-label="Löschen"><svg><use href="#trash"/></svg></button>
            <button class="sq" aria-label="Mehr"><svg><use href="#more"/></svg></button>
          </div>

          <div class="corner">
            <button aria-label="Nach unten"><svg><use href="#arrowdown"/></svg></button>
            <button class="light" aria-label="Maximieren"><svg><use href="#frame"/></svg></button>
          </div>
          <span class="tag blue" style="--y:406">Hoch</span>
          <span class="tag white" style="--y:991">Gap:Plot</span>
          <span class="tag white" style="--y:1016">Gap:Plot</span>
          <span class="tag blue" style="--y:1172">Tief</span>
        </div>

        <div class="price">
          <span style="--y:268">38,625000</span>
          <span style="--y:393">38,500000</span>
          <span style="--y:519">38,375000</span>
          <span style="--y:644">38,250000</span>
          <span style="--y:769">38,125000</span>
          <span style="--y:894">38,000000</span>
          <span style="--y:1145">37,750000</span>
          <span style="--y:1270">37,625000</span>
          <span class="mark blue" style="--y:406">38,490000</span>
          <span class="mark yellow" style="--y:620">38,274457</span>
          <span class="mark lime" style="--y:831">38,065442</span>
          <span class="mark grey" style="--y:920">37,975000</span>
          <span class="mark white" style="--y:991">37,905000</span>
          <span class="mark white" style="--y:1016">37,900000</span>
          <span class="mark red" style="--y:1041">37,865000</span>
          <span class="mark blue" style="--y:1172">37,725000</span>
          <span class="mark flame" style="--y:1237">37,658818</span>
          <div class="units">
            <label><select aria-label="Währung"><option>USD</option></select><svg><use href="#down"/></svg></label>
            <label><select aria-label="Einheit"><option>apoz</option></select><svg><use href="#down"/></svg></label>
          </div>
          <div class="scale"><button>A</button><button>L</button></div>
        </div>

        <div class="time">
          <span style="--x:86">12:00</span><span style="--x:200">15:00</span><span style="--x:316">18:00</span><span style="--x:431">21:00</span><span style="--x:508">15</span><span style="--x:622">03:00</span><span style="--x:738">06:00</span><span style="--x:853">09:00</span><span style="--x:968">12:00</span><span style="--x:1084">15:00</span><span style="--x:1199">18:00</span><span style="--x:1314">21:00</span><span style="--x:1391">18</span><span style="--x:1506">03:00</span><span style="--x:1621">06:00</span><span style="--x:1737">09:00</span><span style="--x:1852">12:00</span><span style="--x:1967">15:00</span><span style="--x:2083">18:00</span>
          <b>Mo 18-08-2025 &nbsp; 22:25</b>
        </div>
        <button class="axisgear" aria-label="Achse"><svg><use href="#hex"/></svg></button>
      </div>

      <div class="bar ranges">
        <div class="rangelist"><button>1T</button><button>5T</button><button>1M</button><button>3M</button><button>6M</button><button>YTD</button><button>1J</button><button>5J</button><button>Alle</button></div>
        <i class="sep"></i>
        <button class="ic" aria-label="Gehe zu"><svg><use href="#goto"/></svg></button>
        <div class="status"><button class="clock">01:58:10 UTC+2</button><button>ETH</button><i class="sep"></i><button>b-adj</button><button class="sq soft" aria-label="Verkleinern"><svg><use href="#collapse"/></svg></button></div>
      </div>
      <div class="bar panels">
        <button>Pine Editor</button><button>Strategietester</button><button>Handelsfeld für Wiedergabemodus</button><button>Trading-Panel</button>
        <div class="panelctl"><button class="ic" aria-label="Öffnen"><svg><use href="#up"/></svg></button><button class="ic" aria-label="Maximieren"><svg><use href="#frame"/></svg></button></div>
      </div>

      <div class="float favs">
        <i class="grip"></i>
        <button class="sq" aria-label="Parallelkanal"><svg><use href="#parallel"/></svg></button>
        <button class="sq" aria-label="Rechteck"><svg><use href="#rect"/></svg></button>
        <button class="sq" aria-label="Verlängerte Linie"><svg><use href="#extended"/></svg></button>
        <button class="sq" aria-label="Trendlinie"><svg><use href="#trend"/></svg></button>
        <button class="sq" aria-label="Horizontale"><svg><use href="#hline"/></svg></button>
        <button class="sq" aria-label="Pin"><svg><use href="#pin"/></svg></button>
        <button class="sq" aria-label="Pfeil"><svg><use href="#arrow"/></svg></button>
        <button class="sq" aria-label="Text"><svg><use href="#text"/></svg></button>
        <button class="sq" aria-label="Pfeillinie"><svg><use href="#marker"/></svg></button>
        <button class="sq" aria-label="Gann"><svg><use href="#gann"/></svg></button>
        <button class="sq" aria-label="Fib Extension"><svg><use href="#fibext"/></svg></button>
        <button class="sq" aria-label="Fib Retracement"><svg><use href="#fib"/></svg></button>
        <button class="sq" aria-label="Preisspanne"><svg><use href="#measure"/></svg></button>
        <button class="sq" aria-label="Kreis"><svg><use href="#circle"/></svg></button>
        <button class="sq lettered"><small>A&nbsp; C</small><svg><use href="#pattern"/></svg></button>
        <button class="sq lettered"><small>W&nbsp; Z</small><svg><use href="#pattern"/></svg></button>
        <button class="sq lettered"><small>W&nbsp; Y</small><svg><use href="#pattern"/></svg></button>
        <button class="sq lettered"><small>A&nbsp; E</small><svg><use href="#pattern"/></svg></button>
        <button class="sq accent" aria-label="Fadenkreuz"><svg><use href="#cross"/></svg></button>
      </div>
    </section>

    <aside class="right">
      <button class="sq" aria-label="Watchlist"><svg><use href="#bookmark"/></svg></button>
      <button class="sq" aria-label="Alarme"><svg><use href="#alarm"/></svg><b class="badge wide">99+</b></button>
      <button class="sq" aria-label="Objekte"><svg><use href="#layers"/></svg></button>
      <button class="sq" aria-label="Chat"><svg><use href="#chat"/></svg></button>
      <button class="sq bottom" aria-label="Screener"><svg><use href="#radar"/></svg></button>
      <button class="sq" aria-label="Pine"><svg><use href="#pyramid"/></svg></button>
      <button class="sq" aria-label="Kalender"><svg><use href="#calendar"/></svg></button>
      <button class="sq light round" aria-label="Produkte"><svg><use href="#apps"/></svg></button>
      <hr>
      <button class="sq" aria-label="Neuigkeiten"><svg><use href="#feed"/></svg><b class="badge"></b></button>
      <button class="sq" aria-label="Mitteilungen"><svg><use href="#bell"/></svg><b class="badge">4</b></button>
      <button class="sq" aria-label="Hilfe"><svg><use href="#help"/></svg></button>
    </aside>
  </main>
</div>
<script src="chart.js"></script>
</body>
</html>
```

FILE: styles.css
```css
* { box-sizing: border-box; }
body {
  margin: 0;
  background: #2e2e2e;
  color: #d6d6d6;
  font: 19px/26px "Noto Sans", "Open Sans", sans-serif;
}
button {
  margin: 0;
  padding: 0;
  border: 0;
  background: none;
  color: inherit;
  font: inherit;
  white-space: nowrap;
}
svg { fill: none; stroke: currentColor; display: block; flex: none; }
hr { margin: 5px 0; border: 0; height: 1px; background: #4a4a4a; width: 52px; }
.sprite { position: absolute; width: 0; height: 0; }
.app {
  min-height: 100vh;
  display: flex;
  flex-direction: column;
  border-bottom: 2px solid #000;
}
.sep { width: 1px; height: 33px; background: #4a4a4a; flex: none; }
.ic, .ic svg { width: 38px; height: 38px; flex: none; }
.chev, .chev svg { width: 20px; height: 20px; flex: none; }
.chev svg { stroke-width: 2; }
.dot { fill: #0f0f0f; }
.sq {
  width: 50px;
  height: 50px;
  border-radius: 8px;
  display: flex;
  align-items: center;
  justify-content: center;
  position: relative;
  flex: none;
}
.sq svg { width: 38px; height: 38px; }
.soft { background: #3d3d3d; }
.light { background: #f2f2f2; color: #0f0f0f; }
.round { border-radius: 50%; }
.bottom { margin-top: auto; }
.lettered small {
  position: absolute;
  top: 1px;
  left: 12px;
  right: 0;
  font-size: 12px;
  line-height: 14px;
  font-weight: 600;
  text-align: center;
}
.badge {
  position: absolute;
  top: -1px;
  right: -1px;
  min-width: 24px;
  height: 24px;
  padding: 0 4px;
  border-radius: 12px;
  background: #dc4a49;
  color: #fff;
  font-size: 16px;
  line-height: 24px;
  font-weight: 600;
  text-align: center;
}

/* window tabs */
.tabbar { height: 52px; background: #3d3d3d; display: flex; align-items: center; }
.tabs { flex: 0 1 2008px; display: flex; align-self: stretch; }
.tab {
  flex: 1 1 0;
  min-width: 0;
  display: flex;
  align-items: center;
  gap: 5px;
  padding-left: 18px;
  position: relative;
  color: #9a9a9a;
}
.tab::after {
  content: "";
  position: absolute;
  right: 0;
  top: 10px;
  height: 32px;
  width: 1px;
  background: #5a5a5a;
}
.tab.last::after, .tab.active::after { display: none; }
.tab.active { background: #0f0f0f; border-radius: 8px 8px 0 0; }
.tab span {
  width: 20px;
  overflow: hidden;
  text-align: left;
  -webkit-mask-image: linear-gradient(90deg, #000 50%, transparent);
  mask-image: linear-gradient(90deg, #000 50%, transparent);
}
.newtab { margin-left: 6px; }
.coin {
  width: 27px;
  height: 27px;
  flex: none;
  border-radius: 50%;
  color: #fff;
  font: 700 12px/27px "Noto Sans", sans-serif;
  text-align: center;
}
.coin.x { font-size: 19px; font-weight: 400; }
.blue { background: #4a69ad; }
.sky { background: #58a3d8; }
.crimson { background: #b02d33; }
.teal { background: #4689b4; }
.navy { background: #2c4680; }
.steel { background: #4877c2; }
.silver { background: #afadba; }
.gold { background: #c5992b; }
.coin.orange { background: #e8943a; font-size: 19px; }
.black { background: #14161a; }
.coin.slblue { background: #3f7fc4; font-size: 15px; }
.slblue b { color: #f0b840; }
.dim { color: #8c8c8c; }
.window { margin-left: auto; display: flex; align-items: center; gap: 17px; }
.winbtns { display: flex; color: #c4c4c4; }
.winbtns button { width: 73px; display: flex; justify-content: center; }
.winbtns svg { width: 38px; height: 38px; }

/* top toolbar */
.toolbar {
  height: 59px;
  padding: 4px 7px 0 18px;
  background: #0f0f0f;
  display: flex;
  align-items: center;
  gap: 15px;
}
.avatar {
  width: 41px;
  height: 41px;
  border-radius: 50%;
  background: #8aa063;
  color: #fff;
  font-size: 26px;
  position: relative;
  flex: none;
}
.avatar .badge { top: -6px; right: -17px; width: 28px; height: 26px; border: 1px solid #0f0f0f; font-weight: 400; padding: 0; }
.symbol { width: 131px; margin-left: 11px; display: flex; align-items: center; flex: none; }
.symbol svg { width: 38px; height: 38px; }
.bold { stroke-width: 1.5; }
.intervals {
  flex: 0 1 1332px;
  margin: 0 -6px;
  display: flex;
  justify-content: space-between;
}
.intervals button { height: 50px; padding: 0 6px; border-radius: 8px; }
.intervals .on { background: #3d3d3d; }
.tools { display: flex; align-items: center; gap: 16px; }
.faint { color: #6a6a6a; }
.share { margin-left: auto; display: flex; align-items: center; gap: 8px; }
.layoutname { width: 69px; overflow: hidden; text-align: left; }
.publish {
  width: 177px;
  height: 42px;
  border-radius: 21px;
  background: #f2f2f2;
  color: #0f0f0f;
  font-size: 20px;
}

/* main area */
.main {
  flex: 1;
  margin-top: 6px;
  display: grid;
  grid-template-columns: 76px minmax(0, 1fr) 64px;
  gap: 7px;
}
.left, .right { background: #0f0f0f; display: flex; flex-direction: column; align-items: center; }
.left { gap: 6px; padding: 12px 0 25px; border-radius: 0 6px 0 0; }
.right { gap: 17px; padding: 11px 0 9px; border-radius: 6px 0 0 0; }
.right hr { margin: 0; }
.center { display: flex; flex-direction: column; position: relative; }
.chart {
  flex: 1;
  margin-bottom: 1px;
  display: grid;
  grid-template-columns: minmax(0, 1fr) 105px;
  grid-template-rows: minmax(0, 1fr) 38px;
  border: 3px solid #8c8c8c;
  border-radius: 6px;
  background: #000;
  overflow: hidden;
}
.plot { position: relative; overflow: hidden; }
.draw { position: absolute; inset: 0; width: 100%; height: 100%; stroke: none; }
.pin {
  position: absolute;
  left: calc((var(--x) - 86) / 2235 * 100%);
  top: calc((var(--y) - 120) / 1283 * 100%);
}
.note {
  height: 18.4%;
  display: flex;
  flex-direction: column;
  justify-content: space-between;
  color: #fff;
  font-size: 28px;
  line-height: 29px;
  white-space: nowrap;
}
.ok { color: #fff; font-size: 27px; line-height: 30px; font-weight: 500; transform: translate(-50%, -50%); }
.legend { position: absolute; left: 9px; top: 3px; }
.row { height: 35px; display: flex; align-items: center; color: #a9a9b2; }
.row .name { font-size: 22px; width: 282px; margin-left: 5px; }
.flag { width: 18px; height: 18px; stroke: none; }
.live {
  width: 26px;
  height: 26px;
  margin: 0 25px 0 27px;
  border: 7px solid #0e2a22;
  border-radius: 50%;
  background: #4bb58e;
}
.ohlc { margin: 0; display: flex; gap: 9px; font-size: 18px; }
.ohlc div { display: flex; gap: 1px; }
.ohlc dd { margin: 0; color: #9c3236; }
.gap { font-size: 17px; gap: 9px; }
.gap b { font-weight: 500; color: #fff; font-size: 18px; }
.croc { font-size: 18px; color: #4a4a4a; gap: 13px; }
.croc svg { width: 28px; height: 28px; color: #a0a0a0; stroke-width: 1.5; }
.fold {
  width: 42px;
  height: 30px;
  margin: 5px 0 0 -3px;
  border: 1px solid #333;
  border-radius: 4px;
  display: flex;
  align-items: center;
  justify-content: center;
}
.fold svg { width: 20px; height: 20px; stroke-width: 2.5; }
.float { background: #1e1e1e; border-radius: 8px; display: flex; align-items: center; }
.props { height: 55px; padding-left: 3px; gap: 6px; }
.grip {
  width: 18px;
  height: 27px;
  margin: 0 5px;
  flex: none;
  background: radial-gradient(circle, #555 2px, transparent 2px) 0 0 / 9px 9px;
}
.swatch { flex-direction: column; }
.swatch svg { height: 32px; width: 32px; }
.swatch::after { content: ""; width: 32px; height: 6px; border-radius: 3px; margin-top: 3px; }
.swatch.red::after { background: #e0391d; }
.swatch.green::after { background: #7df552; }
.sq.width { width: 92px; gap: 1px; font-weight: 500; }
.corner { position: absolute; right: 6px; top: 3px; display: flex; gap: 6px; }
.corner button {
  width: 35px;
  height: 35px;
  border: 1px solid #333;
  border-radius: 5px;
  background: #0f0f0f;
  display: flex;
  align-items: center;
  justify-content: center;
}
.corner svg { width: 24px; height: 24px; stroke-width: 1.5; }
.corner .light { background: #f2f2f2; }
.tag {
  position: absolute;
  right: 1px;
  top: calc((var(--y) - 120) / 1283 * 100%);
  transform: translateY(-50%);
  padding: 0 5px;
  border-radius: 3px 0 0 3px;
  font-size: 17px;
  line-height: 26px;
  font-weight: 500;
}
.tag.blue, .mark.blue { background: #1f2c5c; color: #fff; }
.white { background: #fff; color: #111; }

.price { position: relative; border-left: 1px solid #1c1c20; font-size: 17px; color: #a6a6ad; }
.price > span {
  position: absolute;
  left: 0;
  width: 99px;
  padding-left: 12px;
  top: calc((var(--y) - 120) / 1283 * 100%);
  transform: translateY(-50%);
}
.price .mark { border-radius: 0 3px 3px 0; color: #fff; font-weight: 500; }
.price .mark.yellow { background: #f8e855; color: #222; font-weight: 400; }
.price .mark.lime { background: #84fb58; color: #143008; font-weight: 400; }
.price .mark.grey { background: #585858; }
.price .mark.white { background: #fff; color: #111; font-weight: 400; }
.price .mark.red { background: #d64a49; }
.price .mark.flame { background: #e23a1e; }
.units {
  position: absolute;
  left: 4px;
  top: 3px;
  width: 97px;
  height: 72px;
  border: 1px solid #333;
  border-radius: 6px;
  background: #0f0f0f;
  display: flex;
  flex-direction: column;
}
.units label { flex: 1; display: flex; align-items: center; position: relative; }
.units select {
  appearance: none;
  width: 100%;
  padding: 0 0 0 5px;
  border: 0;
  background: none;
  color: #d6d6d6;
  font: 17px/30px "Noto Sans", sans-serif;
}
.units svg { position: absolute; right: 3px; width: 12px; height: 12px; stroke-width: 3.5; }
.scale {
  position: absolute;
  right: 0;
  bottom: 0;
  left: 0;
  padding: 4px 18px 7px 21px;
  display: flex;
  gap: 6px;
}
.scale::before {
  content: "";
  position: absolute;
  left: 0;
  right: 5px;
  bottom: 43px;
  height: 8px;
  background: #3a3a47;
}
.scale button { flex: 1; height: 31px; border: 1px solid #383838; border-radius: 5px; font-size: 17px; font-weight: 500; }

.time { position: relative; border-top: 1px solid #22222a; font-size: 17px; color: #a6a6ad; overflow: hidden; }
.time span {
  position: absolute;
  left: calc((var(--x) - 86) / 2235 * 100%);
  top: 7px;
  transform: translateX(-50%);
}
.time b {
  position: absolute;
  right: 2px;
  top: -1px;
  width: 199px;
  height: 35px;
  border-radius: 0 0 3px 3px;
  background: #3a3a47;
  color: #fff;
  font-weight: 500;
  line-height: 41px;
  text-align: center;
  white-space: nowrap;
}
.axisgear { border: solid #22222a; border-width: 1px 0 0 1px; display: flex; align-items: center; justify-content: center; }
.axisgear svg { width: 28px; height: 28px; stroke-width: 1.5; }

/* bottom bars */
.bar { background: #0f0f0f; border-radius: 6px; display: flex; align-items: center; }
.ranges { height: 56px; padding: 0 8px 0 21px; gap: 15px; }
.rangelist { flex: 0 1 373px; display: flex; justify-content: space-between; }
.status { margin-left: auto; display: flex; align-items: center; gap: 16px; }
.clock { font-size: 20px; }
.panels { height: 55px; margin-top: 5px; padding: 0 8px 0 23px; gap: 46px; border-radius: 6px 6px 0 0; font-weight: 500; }
.panelctl { margin-left: auto; display: flex; gap: 16px; }
.favs {
  position: absolute;
  left: 465px;
  bottom: 46px;
  width: 1092px;
  height: 56px;
  padding: 0 3px;
  justify-content: space-between;
}
.accent { color: #4560e0; }
```

FILE: chart.js
```js
// Five-minute bars: "time position, close position" in plot units.
const closes = `86,479 88,509 91,501 93,470 98,463 102,440 105,425 109,425 111,504 115,526 120,535 123,498 127,507 131,535 136,535 138,501
143,498 147,515 151,507 157,508 160,526 163,545 166,555 170,550 173,610 176,565 178,610 181,665 185,615 188,571 190,606 195,610 198,656
201,615 204,661 208,710 210,660 214,691 219,691 221,620 223,591 226,634 230,680 233,737 236,848 239,825 242,981 246,986 248,870 253,840
255,745 258,737 261,799 265,806 269,851 273,867 277,886 281,875 285,891 288,845 292,870 296,835 302,826 306,810 312,791 317,799 319,862
322,935 325,940 328,927 332,936 335,920 339,875 343,886 347,891 350,878 355,886 358,856 362,845 365,856 369,837 372,851 375,881 379,897
384,872 388,864 392,886 397,872 403,887 408,860 411,800 415,787 421,795 425,816 428,810 431,772 434,771 438,800 442,787 445,795 450,792
455,811 460,850 464,840 469,867 473,880 478,895 480,867 486,870 490,866 495,860 499,852 502,870 507,860 511,852 515,865 520,877 524,875
528,863 532,860 536,867 541,870 545,862 549,856 552,875 557,869 563,865 568,857 571,847 575,857 580,867 584,890 589,887 593,880 598,862
603,880 608,870 613,868 618,856 624,857 627,877 631,887 633,977 636,980 639,937 643,930 646,893 649,915 653,900 656,875 660,871 664,887
665,927 669,922 673,947 676,967 678,1000 681,972 685,947 688,960 692,965 695,922 699,927 704,902 709,900 714,897 716,877 718,870 720,822
723,830 727,830 730,822 735,850 739,830 743,835 750,838 756,833 760,842 764,850 768,833 773,848 777,822 781,835 786,837 792,845 796,822
799,800 803,780 806,795 809,787 813,807 818,827 820,860 825,852 828,833 832,857 836,860 838,840 844,837 848,860 851,887 855,873 858,882
863,895 867,860 871,857 873,927 877,947 879,948 881,887 884,857 888,817 892,812 896,815 899,833 903,862 906,867 908,890 913,867 918,905
922,867 926,867 928,907 930,937 934,1010 937,1000 940,967 944,942 948,953 950,967 953,1017 957,1012 961,993 964,990 968,997 970,1043
973,1050 976,1030 979,1022 983,1030 985,1065 989,1027 993,1055 998,1032 1003,1057 1005,1075 1008,1067 1011,1027 1015,1012 1019,1030
1023,997 1028,1002 1032,1010 1036,1003 1041,1013 1045,1040 1050,1065 1053,1030 1056,1022 1060,1030 1063,1007 1066,967 1068,937 1072,990
1075,997 1078,1030 1082,1022 1085,1013 1087,992 1090,1023 1094,1067 1097,1047 1100,1023 1103,1060 1107,1085 1110,1075 1113,1095 1116,1157
1119,1165 1122,1027 1126,1015 1129,980 1133,967 1137,987 1139,1020 1142,1000 1145,957 1149,957 1153,965 1158,957 1160,890 1164,882
1169,890 1172,873 1176,867 1180,880 1184,868 1187,905 1191,882 1198,887 1202,897 1205,925 1210,927 1213,940 1218,932 1222,945 1226,960
1229,967 1235,952 1238,978 1241,990 1245,967 1249,940 1251,922 1256,912 1262,915 1267,935 1270,917 1276,912 1280,927 1284,907 1288,903
1292,882 1297,895 1302,897 1306,903 1310,902 1316,908 1321,925 1325,910 1330,893 1335,895 1339,898 1344,902 1347,877 1352,875 1358,877
1365,883 1372,887 1378,883 1383,883 1387,870 1390,873 1392,930 1395,932 1398,960 1401,978 1405,973 1408,968 1411,980 1416,982 1422,980
1429,975 1433,990 1436,1000 1439,1050 1443,1042 1446,1023 1449,1012 1453,1002 1456,997 1460,1007 1465,1030`
  .split(/\s+/).map(p => p.split(",").map(Number));

// Bars whose wick reaches far beyond the body: position -> extreme.
const spikes = [[102,405],[181,790],[220,754],[210,590],[234,775],[246,1035],[242,1016],[259,700],[268,766],[281,926],[310,775],
  [326,1005],[329,981],[252,680],[367,816],[230,750],[508,840],[571,835],[636,1006],[677,1060],[806,776],[844,817],[877,980],[892,791],
  [957,1055],[965,970],[1007,1147],[1027,970],[1036,977],[1072,927],[1084,955],[1116,1172],[1200,860],[1391,831],[1443,1065],[404,910],
  [413,765],[936,1026],[1122,1126],[989,1066]];

let seed = 7;
const random = () => (seed = (seed * 16807) % 2147483647) / 2147483647;

function closeAt(x) {
  const i = closes.findIndex(p => p[0] >= x);
  if (i < 1) return i === 0 ? closes[0][1] : closes[closes.length - 1][1];
  const [x0, y0] = closes[i - 1], [x1, y1] = closes[i];
  return y0 + (y1 - y0) * (x - x0) / (x1 - x0);
}

let wicks = "", ups = "", downs = "";
let open = closes[0][1] - 12;
for (let t = 87; t < 1467; t += 3.2) {
  const x = Math.round(t);
  const close = Math.round(closeAt(t) + (random() - .5) * 6);
  const top = Math.min(open, close), height = Math.max(1, Math.abs(close - open));
  let high = top - random() * random() * 22, low = top + height + random() * random() * 22;
  for (const [sx, sy] of spikes) {
    if (Math.abs(sx - t) <= 1.6) { high = Math.min(high, sy); low = Math.max(low, sy); }
  }
  wicks += `M${x + .5} ${high.toFixed(0)}V${low.toFixed(0)}`;
  const body = `M${x - 1} ${top}h3v${height}h-3z`;
  if (close <= open) ups += body; else downs += body;
  open = close;
}
document.getElementById("wicks").setAttribute("d", wicks);
document.getElementById("ups").setAttribute("d", ups);
document.getElementById("downs").setAttribute("d", downs);
```
